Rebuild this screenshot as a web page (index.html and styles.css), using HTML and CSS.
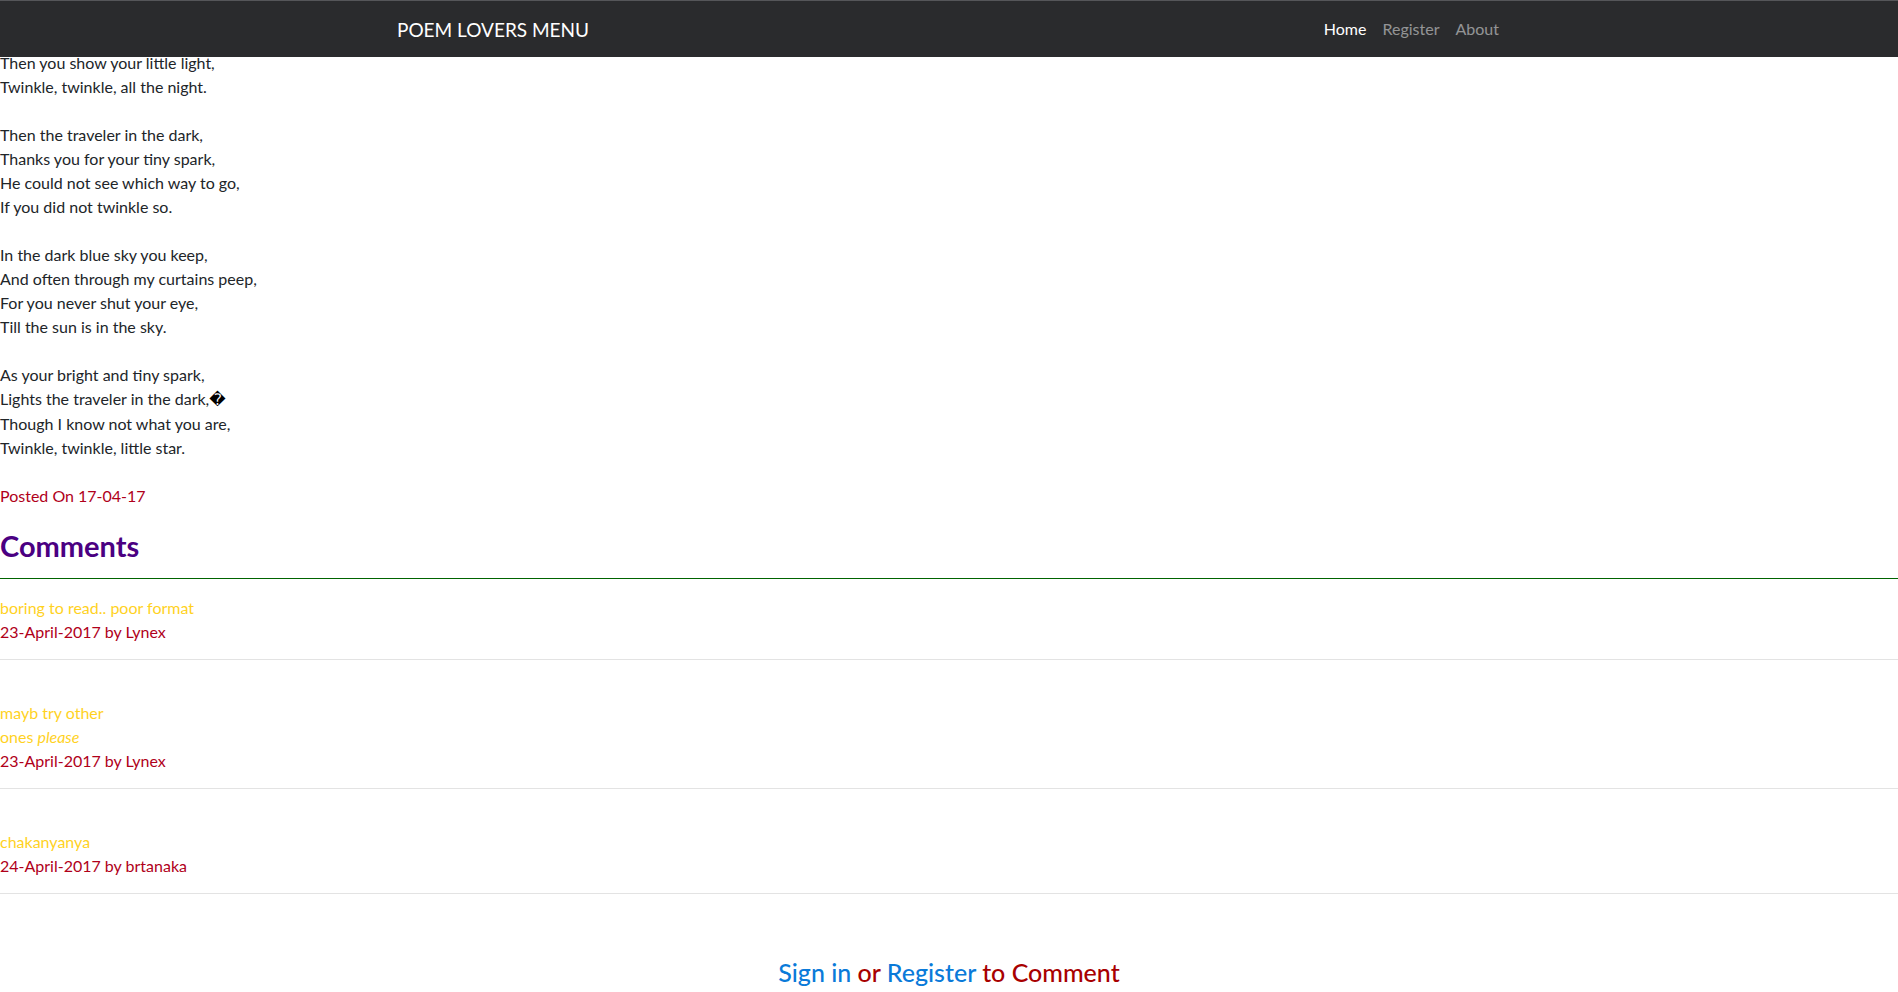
FILE: index.html
```html
<!DOCTYPE html>
<html lang="en">
<head>
<meta charset="utf-8">
<title>Poem Lovers</title>
<link rel="stylesheet" href="styles.css">
</head>
<body>
<nav class="navbar">
  <div class="navbar-inner">
    <a class="brand" href="#">POEM LOVERS MENU</a>
    <ul class="nav">
      <li><a class="nav-link active" href="#">Home</a></li>
      <li><a class="nav-link" href="#">Register</a></li>
      <li><a class="nav-link" href="#">About</a></li>
    </ul>
  </div>
</nav>

<main class="content">
  <p class="poem">Then you show your little light,<br>
Twinkle, twinkle, all the night.<br>
<br>
Then the traveler in the dark,<br>
Thanks you for your tiny spark,<br>
He could not see which way to go,<br>
If you did not twinkle so.<br>
<br>
In the dark blue sky you keep,<br>
And often through my curtains peep,<br>
For you never shut your eye,<br>
Till the sun is in the sky.<br>
<br>
As your bright and tiny spark,<br>
Lights the traveler in the dark,<span class="bad">&#xFFFD;</span><br>
Though I know not what you are,<br>
Twinkle, twinkle, little star.</p>

  <p class="posted">Posted On 17-04-17</p>

  <h2 class="comments-title">Comments</h2>

  <section class="comments">
    <div class="comment first">
      <p class="comment-text">boring to read.. poor format</p>
      <p class="comment-meta">23-April-2017 by Lynex</p>
    </div>
    <div class="comment">
      <p class="comment-text">mayb try other<br>ones <em>please</em></p>
      <p class="comment-meta">23-April-2017 by Lynex</p>
    </div>
    <div class="comment">
      <p class="comment-text">chakanyanya</p>
      <p class="comment-meta">24-April-2017 by brtanaka</p>
    </div>
  </section>

  <h4 class="signin"><a href="#">Sign in</a> or <a href="#">Register</a> to Comment</h4>
</main>
</body>
</html>
```

FILE: styles.css
```css
* { box-sizing: border-box; }

html, body {
  margin: 0;
  padding: 0;
}

body {
  font-family: Lato, "Open Sans", "Liberation Sans", sans-serif;
  font-size: 16px;
  line-height: 24px;
  color: #212529;
  background: #fff;
}

.navbar {
  position: fixed;
  top: 0;
  left: 0;
  right: 0;
  height: 57px;
  background: #2a2b2d;
  border-top: 1px solid #555659;
  z-index: 10;
}

.navbar-inner {
  width: 1140px;
  margin: 0 auto;
  padding: 0 12px 0 15px;
  height: 56px;
  display: flex;
  align-items: center;
  justify-content: space-between;
}

.brand {
  color: #fff;
  text-decoration: none;
  font-size: 19px;
  line-height: 30px;
  padding: 2px 0 0 3px;
}

.nav {
  list-style: none;
  margin: 0;
  padding: 0;
  display: flex;
}

.nav-link {
  display: block;
  padding: 0 8px;
  color: rgba(255, 255, 255, 0.5);
  text-decoration: none;
  font-size: 16px;
  line-height: 24px;
}

.nav-link.active {
  color: #fff;
}

.content {
  padding-top: 51px;
}

.poem {
  margin: 0 0 24px;
}

.bad {
  font-family: "DejaVu Sans", sans-serif;
  color: #000;
}

.posted {
  margin: 0 0 20px;
  color: #b0001a;
}

.comments-title {
  margin: 0;
  font-size: 29px;
  line-height: 36px;
  font-weight: 700;
  color: #4b0082;
  padding-bottom: 14px;
  border-bottom: 1px solid #006400;
}

.comment {
  padding-top: 41px;
  padding-bottom: 15px;
  border-bottom: 1px solid #e3e3e3;
}

.comment.first {
  padding-top: 17px;
}

.comment-text {
  margin: 0;
  color: #ffd21f;
}

.comment-meta {
  margin: 0;
  color: #b0001a;
}

.signin {
  margin: 64px 0 0;
  text-align: center;
  font-size: 25px;
  line-height: 29px;
  font-weight: 500;
  color: #a80000;
}

.signin a {
  color: #0a7ad9;
  text-decoration: none;
}
```
